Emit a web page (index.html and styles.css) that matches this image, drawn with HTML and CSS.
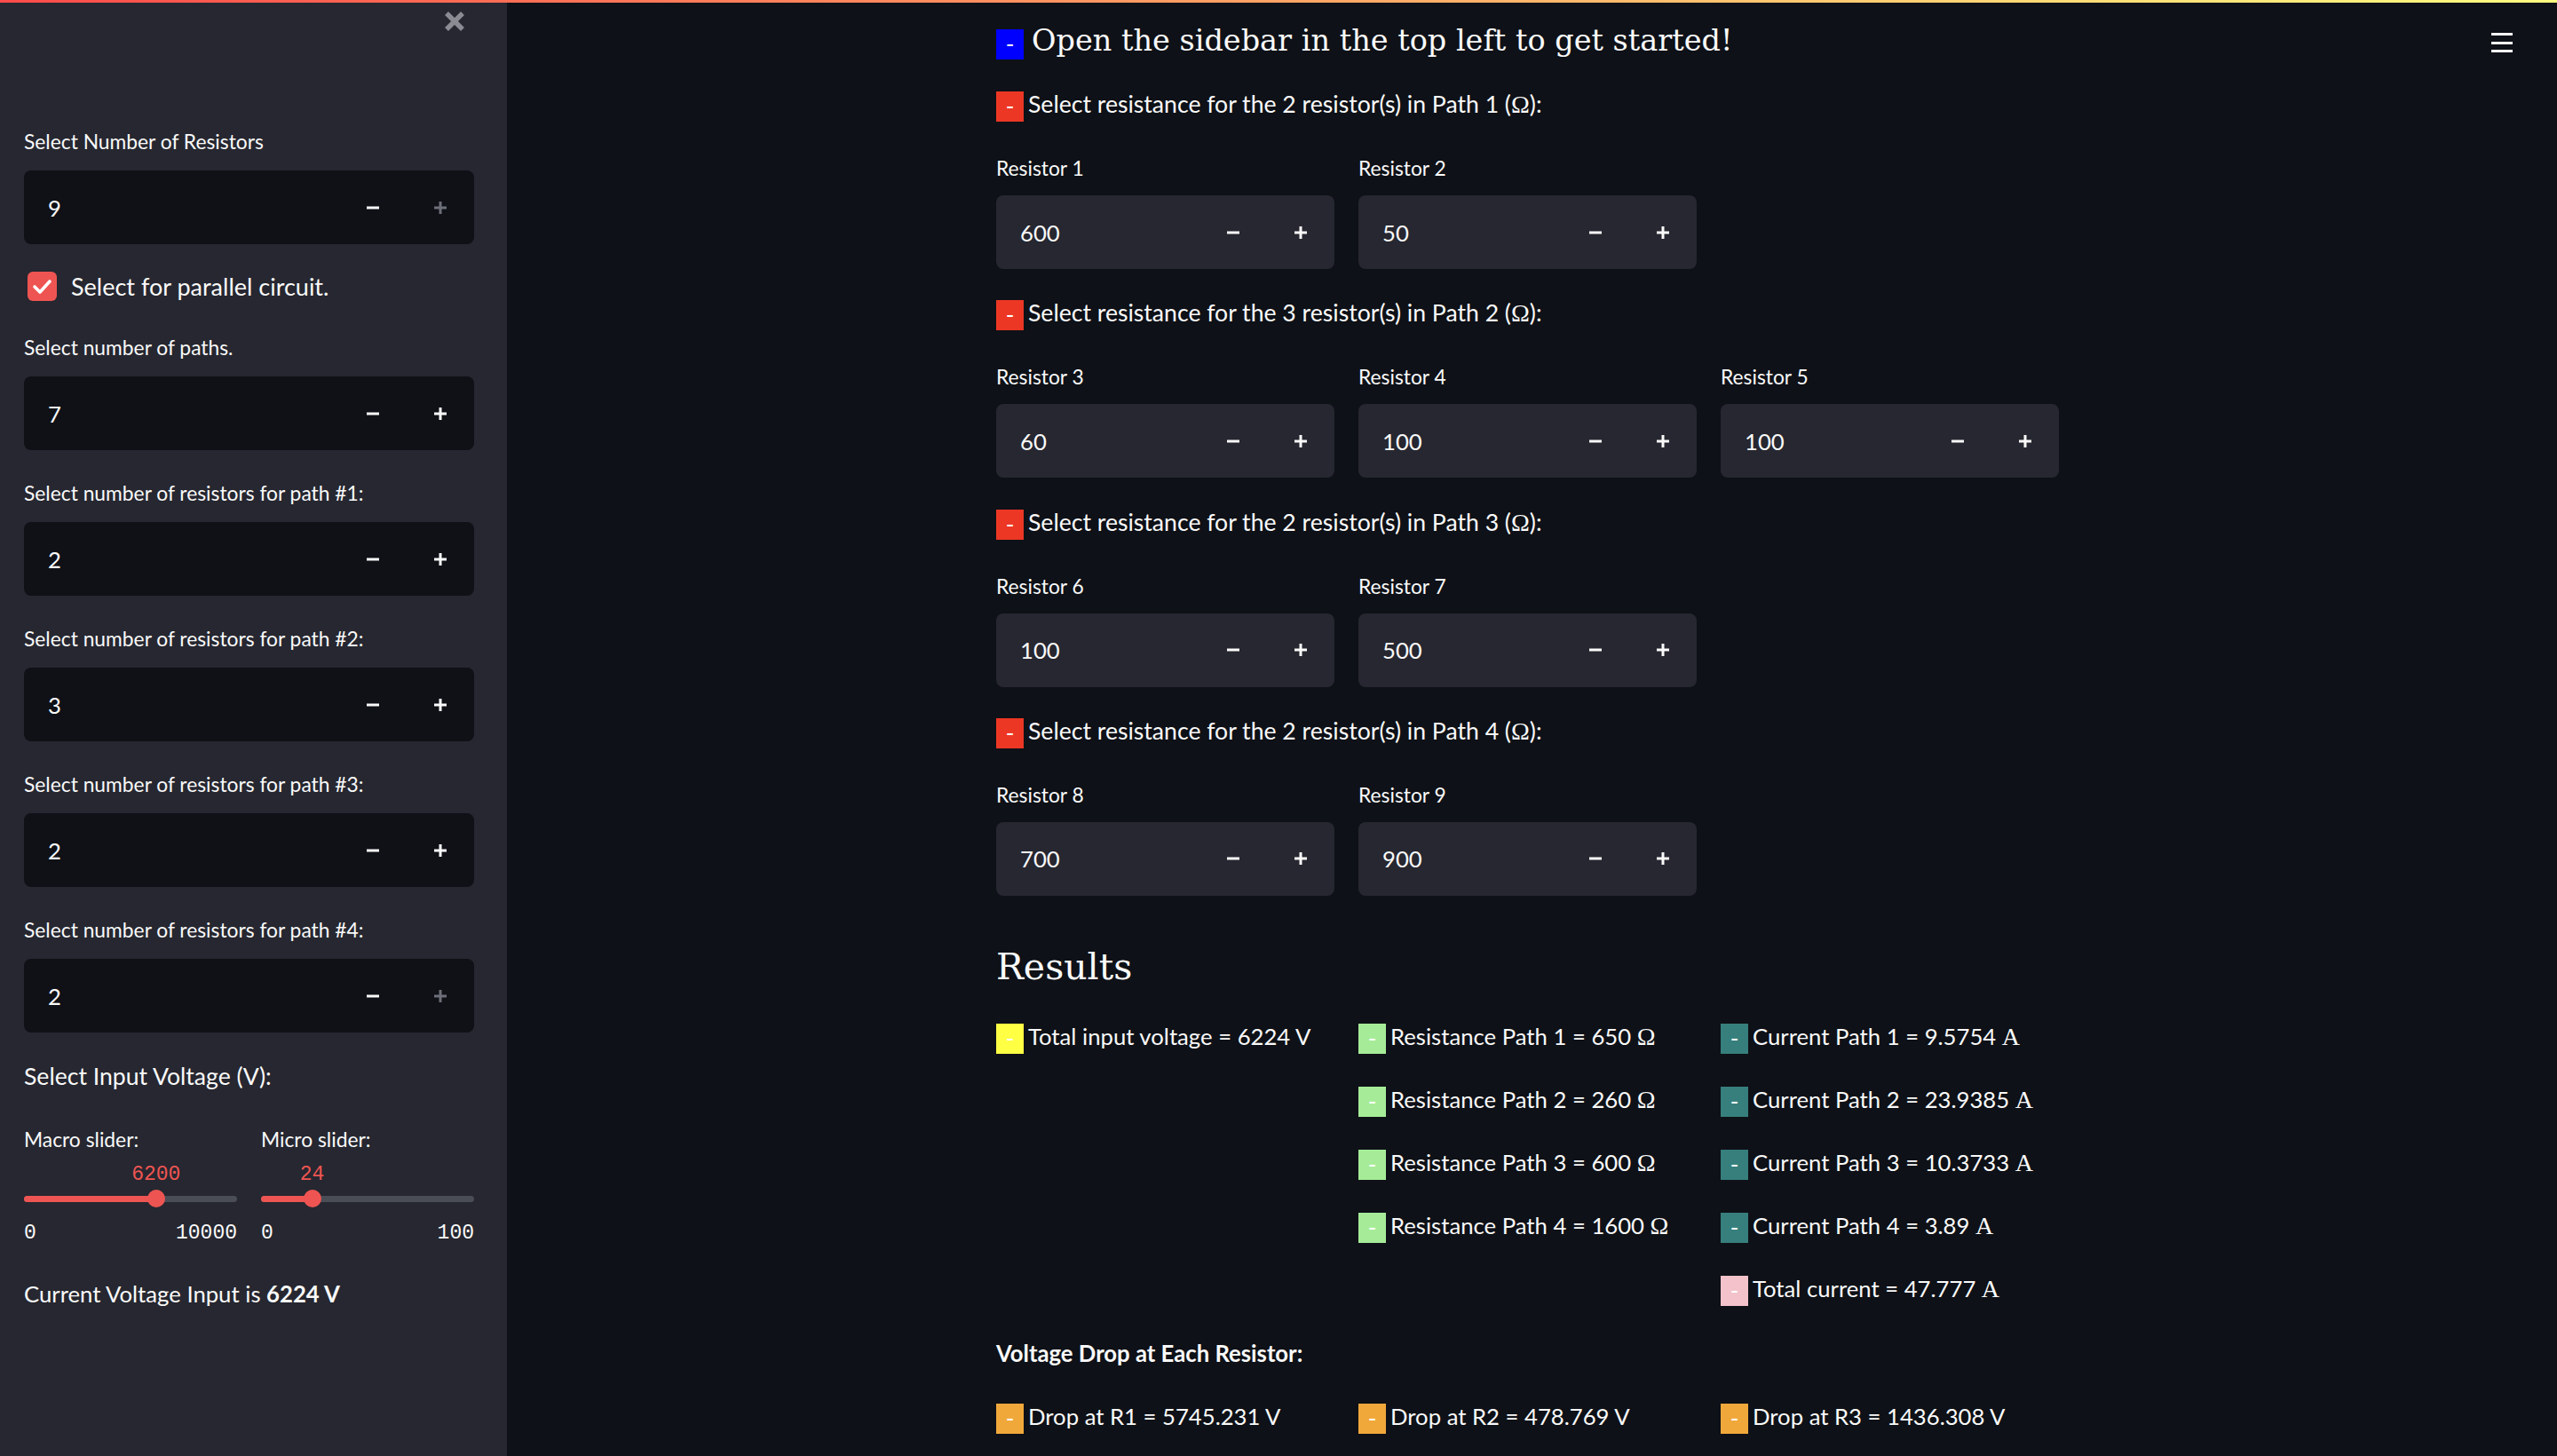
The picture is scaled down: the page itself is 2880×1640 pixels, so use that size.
FILE: index.html
```html
<!DOCTYPE html>
<html lang="en">
<head>
<meta charset="utf-8">
<title>Circuit Calculator</title>
<link rel="stylesheet" href="styles.css">
</head>
<body>
<div class="decoration"></div>
<button class="menu" aria-label="Main menu"><span></span><span></span><span></span></button>
<div class="app">
  <aside class="sidebar">
    <div class="sidebar-head">
      <button class="close" aria-label="Close sidebar">
        <svg width="24" height="24" viewBox="0 0 24 24"><path d="M3 3L21 21M21 3L3 21" stroke="currentColor" stroke-width="5.5" fill="none"/></svg>
      </button>
    </div>
    <div class="sidebar-body">
      <div class="field">
        <span class="label">Select Number of Resistors</span>
        <div class="num num-dark">
          <span class="num-value">9</span>
          <span class="num-btn"><svg width="14" height="14" viewBox="0 0 14 14"><path d="M0 7H14" stroke="currentColor" stroke-width="3"/></svg></span>
          <span class="num-btn disabled"><svg width="14" height="14" viewBox="0 0 14 14"><path d="M0 7H14M7 0V14" stroke="currentColor" stroke-width="3"/></svg></span>
        </div>
      </div>
      <label class="check">
        <span class="check-box"><svg width="33" height="33" viewBox="0 0 33 33"><path d="M8 17L14 23L25 11" stroke="#fff" stroke-width="3.6" fill="none" stroke-linecap="round" stroke-linejoin="round"/></svg></span>
        Select for parallel circuit.
      </label>
      <div class="field after-check">
        <span class="label">Select number of paths.</span>
        <div class="num num-dark">
          <span class="num-value">7</span>
          <span class="num-btn"><svg width="14" height="14" viewBox="0 0 14 14"><path d="M0 7H14" stroke="currentColor" stroke-width="3"/></svg></span>
          <span class="num-btn"><svg width="14" height="14" viewBox="0 0 14 14"><path d="M0 7H14M7 0V14" stroke="currentColor" stroke-width="3"/></svg></span>
        </div>
      </div>
      <div class="field">
        <span class="label">Select number of resistors for path #1:</span>
        <div class="num num-dark">
          <span class="num-value">2</span>
          <span class="num-btn"><svg width="14" height="14" viewBox="0 0 14 14"><path d="M0 7H14" stroke="currentColor" stroke-width="3"/></svg></span>
          <span class="num-btn"><svg width="14" height="14" viewBox="0 0 14 14"><path d="M0 7H14M7 0V14" stroke="currentColor" stroke-width="3"/></svg></span>
        </div>
      </div>
      <div class="field">
        <span class="label">Select number of resistors for path #2:</span>
        <div class="num num-dark">
          <span class="num-value">3</span>
          <span class="num-btn"><svg width="14" height="14" viewBox="0 0 14 14"><path d="M0 7H14" stroke="currentColor" stroke-width="3"/></svg></span>
          <span class="num-btn"><svg width="14" height="14" viewBox="0 0 14 14"><path d="M0 7H14M7 0V14" stroke="currentColor" stroke-width="3"/></svg></span>
        </div>
      </div>
      <div class="field">
        <span class="label">Select number of resistors for path #3:</span>
        <div class="num num-dark">
          <span class="num-value">2</span>
          <span class="num-btn"><svg width="14" height="14" viewBox="0 0 14 14"><path d="M0 7H14" stroke="currentColor" stroke-width="3"/></svg></span>
          <span class="num-btn"><svg width="14" height="14" viewBox="0 0 14 14"><path d="M0 7H14M7 0V14" stroke="currentColor" stroke-width="3"/></svg></span>
        </div>
      </div>
      <div class="field">
        <span class="label">Select number of resistors for path #4:</span>
        <div class="num num-dark">
          <span class="num-value">2</span>
          <span class="num-btn"><svg width="14" height="14" viewBox="0 0 14 14"><path d="M0 7H14" stroke="currentColor" stroke-width="3"/></svg></span>
          <span class="num-btn disabled"><svg width="14" height="14" viewBox="0 0 14 14"><path d="M0 7H14M7 0V14" stroke="currentColor" stroke-width="3"/></svg></span>
        </div>
      </div>
      <p class="voltage-title">Select Input Voltage (V):</p>
      <div class="sliders">
        <div class="slider">
          <span class="label slider-label">Macro slider:</span>
          <div class="slider-value-row"><span class="slider-value" style="left:62%">6200</span></div>
          <div class="rail"><div class="rail-fill" style="width:62%"></div><div class="thumb" style="left:62%"></div></div>
          <div class="ticks"><span>0</span><span>10000</span></div>
        </div>
        <div class="slider">
          <span class="label slider-label">Micro slider:</span>
          <div class="slider-value-row"><span class="slider-value" style="left:24%">24</span></div>
          <div class="rail"><div class="rail-fill" style="width:24%"></div><div class="thumb" style="left:24%"></div></div>
          <div class="ticks"><span>0</span><span>100</span></div>
        </div>
      </div>
      <p class="current-voltage">Current Voltage Input is <strong>6224 V</strong></p>
    </div>
  </aside>

  <main class="main">
    <div class="block">
      <h1 class="title"><span class="tag tag-blue">-</span>Open the sidebar in the top left to get started!</h1>

      <section class="path">
        <p class="path-head"><span class="tag tag-red">-</span>Select resistance for the 2 resistor(s) in Path 1 (<span class="math">Ω</span>):</p>
        <div class="cols">
          <div class="field">
            <span class="label">Resistor 1</span>
            <div class="num"><span class="num-value">600</span>
              <span class="num-btn"><svg width="14" height="14" viewBox="0 0 14 14"><path d="M0 7H14" stroke="currentColor" stroke-width="3"/></svg></span>
              <span class="num-btn"><svg width="14" height="14" viewBox="0 0 14 14"><path d="M0 7H14M7 0V14" stroke="currentColor" stroke-width="3"/></svg></span></div>
          </div>
          <div class="field">
            <span class="label">Resistor 2</span>
            <div class="num"><span class="num-value">50</span>
              <span class="num-btn"><svg width="14" height="14" viewBox="0 0 14 14"><path d="M0 7H14" stroke="currentColor" stroke-width="3"/></svg></span>
              <span class="num-btn"><svg width="14" height="14" viewBox="0 0 14 14"><path d="M0 7H14M7 0V14" stroke="currentColor" stroke-width="3"/></svg></span></div>
          </div>
        </div>
      </section>

      <section class="path">
        <p class="path-head"><span class="tag tag-red">-</span>Select resistance for the 3 resistor(s) in Path 2 (<span class="math">Ω</span>):</p>
        <div class="cols">
          <div class="field">
            <span class="label">Resistor 3</span>
            <div class="num"><span class="num-value">60</span>
              <span class="num-btn"><svg width="14" height="14" viewBox="0 0 14 14"><path d="M0 7H14" stroke="currentColor" stroke-width="3"/></svg></span>
              <span class="num-btn"><svg width="14" height="14" viewBox="0 0 14 14"><path d="M0 7H14M7 0V14" stroke="currentColor" stroke-width="3"/></svg></span></div>
          </div>
          <div class="field">
            <span class="label">Resistor 4</span>
            <div class="num"><span class="num-value">100</span>
              <span class="num-btn"><svg width="14" height="14" viewBox="0 0 14 14"><path d="M0 7H14" stroke="currentColor" stroke-width="3"/></svg></span>
              <span class="num-btn"><svg width="14" height="14" viewBox="0 0 14 14"><path d="M0 7H14M7 0V14" stroke="currentColor" stroke-width="3"/></svg></span></div>
          </div>
          <div class="field">
            <span class="label">Resistor 5</span>
            <div class="num"><span class="num-value">100</span>
              <span class="num-btn"><svg width="14" height="14" viewBox="0 0 14 14"><path d="M0 7H14" stroke="currentColor" stroke-width="3"/></svg></span>
              <span class="num-btn"><svg width="14" height="14" viewBox="0 0 14 14"><path d="M0 7H14M7 0V14" stroke="currentColor" stroke-width="3"/></svg></span></div>
          </div>
        </div>
      </section>

      <section class="path">
        <p class="path-head"><span class="tag tag-red">-</span>Select resistance for the 2 resistor(s) in Path 3 (<span class="math">Ω</span>):</p>
        <div class="cols">
          <div class="field">
            <span class="label">Resistor 6</span>
            <div class="num"><span class="num-value">100</span>
              <span class="num-btn"><svg width="14" height="14" viewBox="0 0 14 14"><path d="M0 7H14" stroke="currentColor" stroke-width="3"/></svg></span>
              <span class="num-btn"><svg width="14" height="14" viewBox="0 0 14 14"><path d="M0 7H14M7 0V14" stroke="currentColor" stroke-width="3"/></svg></span></div>
          </div>
          <div class="field">
            <span class="label">Resistor 7</span>
            <div class="num"><span class="num-value">500</span>
              <span class="num-btn"><svg width="14" height="14" viewBox="0 0 14 14"><path d="M0 7H14" stroke="currentColor" stroke-width="3"/></svg></span>
              <span class="num-btn"><svg width="14" height="14" viewBox="0 0 14 14"><path d="M0 7H14M7 0V14" stroke="currentColor" stroke-width="3"/></svg></span></div>
          </div>
        </div>
      </section>

      <section class="path">
        <p class="path-head"><span class="tag tag-red">-</span>Select resistance for the 2 resistor(s) in Path 4 (<span class="math">Ω</span>):</p>
        <div class="cols">
          <div class="field">
            <span class="label">Resistor 8</span>
            <div class="num"><span class="num-value">700</span>
              <span class="num-btn"><svg width="14" height="14" viewBox="0 0 14 14"><path d="M0 7H14" stroke="currentColor" stroke-width="3"/></svg></span>
              <span class="num-btn"><svg width="14" height="14" viewBox="0 0 14 14"><path d="M0 7H14M7 0V14" stroke="currentColor" stroke-width="3"/></svg></span></div>
          </div>
          <div class="field">
            <span class="label">Resistor 9</span>
            <div class="num"><span class="num-value">900</span>
              <span class="num-btn"><svg width="14" height="14" viewBox="0 0 14 14"><path d="M0 7H14" stroke="currentColor" stroke-width="3"/></svg></span>
              <span class="num-btn"><svg width="14" height="14" viewBox="0 0 14 14"><path d="M0 7H14M7 0V14" stroke="currentColor" stroke-width="3"/></svg></span></div>
          </div>
        </div>
      </section>

      <h2 class="results-title">Results</h2>
      <div class="cols results">
        <div class="res-col">
          <div class="item"><span class="tag tag-yellow">-</span>Total input voltage = 6224 V</div>
        </div>
        <div class="res-col">
          <div class="item"><span class="tag tag-green">-</span>Resistance Path 1 = 650 <span class="math">Ω</span></div>
          <div class="item"><span class="tag tag-green">-</span>Resistance Path 2 = 260 <span class="math">Ω</span></div>
          <div class="item"><span class="tag tag-green">-</span>Resistance Path 3 = 600 <span class="math">Ω</span></div>
          <div class="item"><span class="tag tag-green">-</span>Resistance Path 4 = 1600 <span class="math">Ω</span></div>
        </div>
        <div class="res-col">
          <div class="item"><span class="tag tag-teal">-</span>Current Path 1 = 9.5754 <span class="math">A</span></div>
          <div class="item"><span class="tag tag-teal">-</span>Current Path 2 = 23.9385 <span class="math">A</span></div>
          <div class="item"><span class="tag tag-teal">-</span>Current Path 3 = 10.3733 <span class="math">A</span></div>
          <div class="item"><span class="tag tag-teal">-</span>Current Path 4 = 3.89 <span class="math">A</span></div>
          <div class="item"><span class="tag tag-pink">-</span>Total current = 47.777 <span class="math">A</span></div>
        </div>
      </div>

      <p class="drops-title">Voltage Drop at Each Resistor:</p>
      <div class="cols drops">
        <div class="item"><span class="tag tag-orange">-</span>Drop at R1 = 5745.231 V</div>
        <div class="item"><span class="tag tag-orange">-</span>Drop at R2 = 478.769 V</div>
        <div class="item"><span class="tag tag-orange">-</span>Drop at R3 = 1436.308 V</div>
      </div>
    </div>
  </main>
</div>
</body>
</html>
```

FILE: styles.css
```css
* { box-sizing: border-box; }

html, body {
  margin: 0;
  height: 100%;
  overflow: hidden;
}

body {
  background: #0e1117;
  color: #fafafa;
  font-family: Lato, "Open Sans", sans-serif;
}

.decoration {
  position: absolute;
  top: 0;
  left: 0;
  right: 0;
  height: 3px;
  background: linear-gradient(90deg, #ff4b4b, #fffd80);
  z-index: 10;
}

.menu {
  position: absolute;
  top: 37px;
  right: 50px;
  width: 24px;
  height: 22px;
  padding: 0;
  border: 0;
  background: none;
  display: flex;
  flex-direction: column;
  justify-content: space-between;
}

.menu span {
  display: block;
  height: 3px;
  background: #fafafa;
}

.app {
  display: flex;
  height: 1640px;
}

/* ---------- Sidebar ---------- */
.sidebar {
  width: 571px;
  flex: none;
  background: #262730;
  padding: 0 37px 0 27px;
}

.sidebar-head {
  height: 48px;
  display: flex;
  justify-content: flex-end;
  align-items: center;
}

.close {
  width: 24px;
  height: 24px;
  margin-right: 10px;
  padding: 0;
  border: 0;
  background: none;
  color: #8a8b93;
  display: flex;
}

.sidebar-body {
  margin-top: 96px;
  display: flex;
  flex-direction: column;
  gap: 33px;
}

.field {
  display: flex;
  flex-direction: column;
}

.label {
  display: block;
  font-size: 22.8px;
  line-height: 30px;
  margin-bottom: 18px;
}

.num {
  display: flex;
  height: 83px;
  border-radius: 8px;
  background: #262730;
  overflow: hidden;
}

.num-dark { background: #0f1117; }

.num-value {
  flex: 1;
  display: flex;
  align-items: center;
  padding-left: 27px;
  font-size: 25.7px;
}

.num-btn {
  width: 76px;
  flex: none;
  display: flex;
  align-items: center;
  justify-content: center;
  color: #fafafa;
}

.num-btn.disabled { color: #6c6e79; }

.check {
  margin-top: -2px;
  display: flex;
  align-items: center;
  gap: 16px;
  padding-left: 4px;
  font-size: 27px;
  line-height: 33px;
}

.check-box {
  width: 33px;
  height: 33px;
  border-radius: 6px;
  background: #ee5552;
  display: flex;
}

.after-check { margin-top: 4px; }

.voltage-title {
  margin: -1px 0 0;
  font-size: 26.6px;
  line-height: 34px;
}

.sliders {
  margin-top: 6px;
  display: grid;
  grid-template-columns: 1fr 1fr;
  column-gap: 27px;
}

.slider {
  display: flex;
  flex-direction: column;
}

.slider-label { margin-bottom: 10px; }

.slider-value-row {
  position: relative;
  height: 30px;
}

.slider-value {
  position: absolute;
  top: 0;
  transform: translateX(-50%);
  font-family: "Liberation Mono", "DejaVu Sans Mono", monospace;
  font-size: 23px;
  line-height: 30px;
  color: #ee5552;
}

.rail {
  position: relative;
  height: 7px;
  margin: 8.5px 0;
  border-radius: 4px;
  background: #4a4c56;
}

.rail-fill {
  height: 100%;
  border-radius: 4px;
  background: #ee5552;
}

.thumb {
  position: absolute;
  top: 50%;
  width: 20px;
  height: 20px;
  border-radius: 50%;
  background: #ee5552;
  transform: translate(-50%, -50%);
}

.ticks {
  margin-top: 13px;
  display: flex;
  justify-content: space-between;
  font-family: "Liberation Mono", "DejaVu Sans Mono", monospace;
  font-size: 23px;
  line-height: 28px;
}

.current-voltage {
  margin: 3.5px 0 0;
  font-size: 25.7px;
  line-height: 34px;
}

.current-voltage strong { font-weight: 700; }

/* ---------- Main ---------- */
.main {
  flex: 1;
  padding: 20.5px 0 0 551px;
}

.block { width: 1197px; }

.tag {
  display: inline-block;
  overflow: hidden;
  width: 31px;
  height: 34px;
  margin-right: 5px;
  vertical-align: -10px;
  text-align: center;
  font-family: Lato, sans-serif;
  font-size: 26px;
  font-weight: 400;
  line-height: 32px;
  color: #ffffff;
}

.tag-blue { background: #0000ff; }
.tag-red { background: #ec3725; }
.tag-yellow { background: #ffff44; }
.tag-green { background: #a6ec98; }
.tag-teal { background: #367f7d; }
.tag-pink { background: #f4c2ca; }
.tag-orange { background: #f1a83b; }

.math {
  font-family: "Liberation Serif", "DejaVu Serif", serif;
  font-size: 28px;
  line-height: 1;
}

.title {
  margin: 0 0 25.5px;
  font-family: "DejaVu Serif", "Liberation Serif", serif;
  font-size: 33.5px;
  font-weight: 400;
  line-height: 50px;
}

.title .tag { margin-right: 9px; }

.path { margin-bottom: 28.2px; }

.path-head {
  margin: 0;
  font-size: 26.6px;
  line-height: 42px;
}

.cols {
  display: grid;
  grid-template-columns: repeat(3, 1fr);
  column-gap: 27px;
}

.path .cols { margin-top: 36px; }

.path .label { margin-bottom: 16.1px; }

.results-title {
  margin: 50.5px 0 25.5px;
  font-family: "DejaVu Serif", "Liberation Serif", serif;
  font-size: 41px;
  font-weight: 400;
  line-height: 60px;
}

.res-col {
  display: flex;
  flex-direction: column;
  gap: 27px;
}

.item {
  font-size: 25.7px;
  line-height: 44px;
  white-space: nowrap;
}

.drops-title {
  margin: 28.7px 0 27.2px;
  font-size: 25.7px;
  font-weight: 700;
  line-height: 44px;
}

.drops { row-gap: 27px; }
```
